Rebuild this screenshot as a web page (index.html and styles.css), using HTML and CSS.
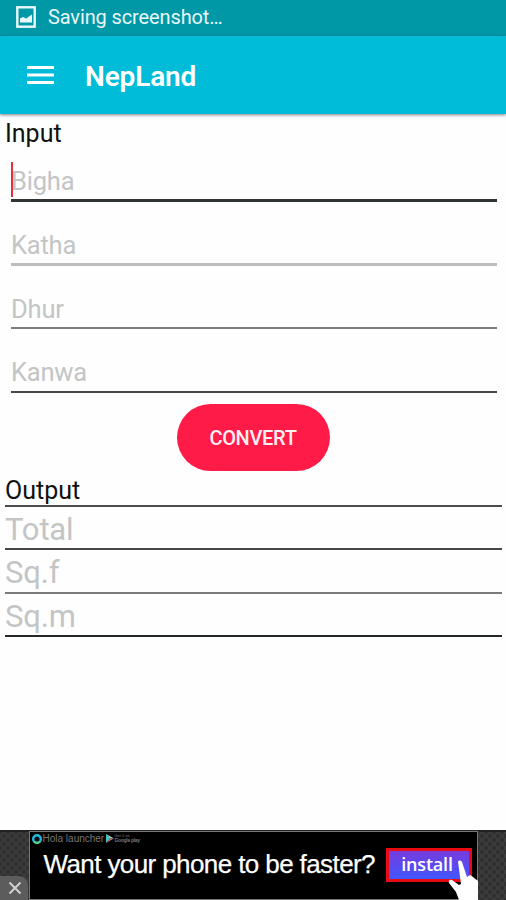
FILE: index.html
```html
<!DOCTYPE html>
<html lang="en">
<head>
<meta charset="utf-8">
<title>NepLand</title>
<link rel="stylesheet" href="styles.css">
</head>
<body>
<div class="status">
  <svg class="status-icon" width="20" height="22" viewBox="0 0 20 22"><rect x="1.3" y="1.3" width="17.4" height="19.4" fill="none" stroke="#e9f8fa" stroke-width="2.4"/><path d="M4 16.500V12.500l3-1.500 3 1.500 6-4v8z" fill="#e9f8fa"/></svg>
  <span class="status-text">Saving screenshot…</span>
</div>
<header class="appbar">
  <svg class="menu" width="27" height="20" viewBox="0 0 27 20"><path d="M0 2.500h27M0 10h27M0 17.500h27" stroke="#fff" stroke-width="3.200"/></svg>
  <h1 class="title">NepLand</h1>
</header>
<main class="content">
  <h2 class="label">Input</h2>
  <div class="fields">
    <div class="field focused"><span class="caret"></span><span class="hint">Bigha</span></div>
    <div class="field soft"><span class="hint">Katha</span></div>
    <div class="field mid"><span class="hint">Dhur</span></div>
    <div class="field"><span class="hint">Kanwa</span></div>
  </div>
  <button class="convert">CONVERT</button>
  <h2 class="label output-label">Output</h2>
  <div class="results">
    <div class="result">Total</div>
    <div class="result pale">Sq.f</div>
    <div class="result dark">Sq.m</div>
  </div>
</main>
<footer class="ad">
  <div class="side"><div class="close"><svg width="14" height="14" viewBox="0 0 14 14"><path d="M1.500 1.500l11 11M12.500 1.500l-11 11" stroke="#d0d0d0" stroke-width="2"/></svg></div></div>
  <div class="banner">
    <div class="brand">
      <svg width="12" height="12" viewBox="0 0 12 12"><circle cx="6" cy="6" r="3.800" fill="#060c18" stroke="#20bce0" stroke-width="2.400"/><path d="M3 8.500a3.800 3.800 0 0 0 6 0" fill="none" stroke="#58d878" stroke-width="2"/></svg>
      <span class="brand-name">Hola launcher</span>
      <svg width="8" height="9" viewBox="0 0 8 9"><path d="M0 0v9l4-4.500z" fill="#3fc6c0"/><path d="M0 0l8 4.500H4z" fill="#b6d8cc"/><path d="M0 9l8-4.500H4z" fill="#c76b65"/></svg>
      <span class="store"><span>Get it on</span><b>Google play</b></span>
    </div>
    <div class="offer">
      <span class="slogan">Want your phone to be faster?</span>
      <span class="install">install</span>
    </div>
    <svg class="hand" width="31" height="40" viewBox="0 0 31 40"><path d="M10 1.500Q12-.5 14 2l5 15 3-2 3 2 5 4v19H11L8 32 1 23q-1-4 3-3l7 5 2-1z" fill="#fff"/></svg>
  </div>
  <div class="side"></div>
</footer>
</body>
</html>
```

FILE: styles.css
```css
* { box-sizing: border-box; }
body {
  margin: 0;
  height: 900px;
  display: flex;
  flex-direction: column;
  overflow: hidden;
  background: #fefefe;
  font-family: Roboto, "Liberation Sans", sans-serif;
}
.status {
  height: 36px;
  flex: none;
  display: flex;
  align-items: flex-start;
  padding: 6px 0 0 16px;
  background: #0097a7;
  color: #e9f8fa;
}
.status-text {
  margin-left: 12px;
  font-size: 20px;
  line-height: 22px;
  letter-spacing: -.12px;
}
.appbar {
  height: 78px;
  flex: none;
  display: flex;
  align-items: center;
  padding: 0 27px;
  background: #00bcd9;
  color: #fff;
  box-shadow: 0 1px 3px rgba(0, 0, 0, .5);
}
.title {
  margin: 3px 0 0 31px;
  font-size: 28px;
  line-height: 34px;
  font-weight: 600;
  letter-spacing: -.15px;
}
.content {
  flex: 1;
  display: flex;
  flex-direction: column;
}
.label {
  height: 35px;
  margin: 5px 0 0 5px;
  font-size: 25px;
  line-height: 30px;
  font-weight: 400;
  color: #111;
}
.fields { padding: 0 9px 0 11px; }
.field {
  position: relative;
  height: 63.5px;
  padding-top: 28px;
  border-bottom: 2px solid #484848;
  color: #c3c5c5;
  font-size: 25.5px;
  line-height: 30px;
  letter-spacing: -.2px;
}
.focused {
  height: 48px;
  padding-top: 12px;
  border-bottom: 3px solid #303333;
}
.soft { border-bottom: 3px solid #bdbdbd; }
.mid { border-color: #7e7e7e; }
.caret {
  position: absolute;
  left: 0;
  top: 8px;
  width: 2px;
  height: 35px;
  background: #e5303a;
}
.convert {
  align-self: center;
  width: 153px;
  height: 67px;
  margin-top: 11px;
  padding: 2px 0 0;
  border: 0;
  border-radius: 34px;
  background: #ff1b48;
  color: #fff0f2;
  font: 500 20px/24px Roboto, sans-serif;
  letter-spacing: -.3px;
}
.output-label {
  height: 29px;
}
.results {
  margin: 0 4px 0 5px;
  border-top: 2px solid #4c4c4c;
}
.result {
  height: 43.5px;
  padding-top: 5px;
  border-bottom: 2px solid #474747;
  color: #c3c5c5;
  font-size: 31px;
  line-height: 36px;
  letter-spacing: -.15px;
}
.pale { border-color: #7b7b7b; }
.dark { border-color: #242828; }
.ad {
  flex: none;
  height: 70px;
  display: flex;
  border-top: 2px solid #222;
  background: #393939;
}
.side {
  flex: 1;
  display: flex;
  align-items: flex-end;
  background-color: #3b3b3b;
  background-image: radial-gradient(circle, #303030 1.7px, transparent 2.3px), radial-gradient(circle, #303030 1.7px, transparent 2.3px);
  background-size: 8px 8px;
  background-position: 0 0, 4px 4px;
}
.close {
  width: 28px;
  height: 24px;
  padding: 4px 0 0 8px;
  border-top-right-radius: 9px;
  background: #5c5c5c;
}
.banner {
  position: relative;
  width: 449px;
  flex: none;
  margin-top: -1px;
  border: 1px solid #777;
  background: #000;
}
.brand {
  height: 13px;
  display: flex;
  align-items: center;
  padding-left: 1px;
  color: #777;
}
.brand-name {
  width: 61px;
  margin: 0 2px 0 0;
  font: 10px/12px "Liberation Sans", sans-serif;
  white-space: nowrap;
}
.store {
  display: flex;
  flex-direction: column;
  margin-left: 1px;
  font: 4px/4px "Liberation Sans", sans-serif;
}
.store b { font-size: 5px; line-height: 5px; letter-spacing: -.3px; }
.offer {
  display: flex;
  align-items: flex-start;
  padding: 3px 0 0 14px;
}
.slogan {
  width: 342px;
  color: #fff;
  font: 26px/32px "Liberation Sans", sans-serif;
  letter-spacing: -.6px;
  white-space: nowrap;
  -webkit-text-stroke: .25px #fff;
}
.install {
  width: 86px;
  height: 34px;
  border: 3px solid #e80c12;
  background: linear-gradient(#783bdd, #4057ff);
  color: #fff;
  font: 600 18px/26px "Open Sans", sans-serif;
  letter-spacing: -.2px;
  text-align: center;
  padding-right: 3px;
}
.hand {
  position: absolute;
  right: -2px;
  bottom: -1px;
}
```
